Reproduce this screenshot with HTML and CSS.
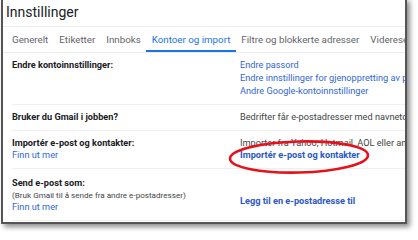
FILE: index.html
```html
<!DOCTYPE html>
<html lang="no">
<head>
<meta charset="utf-8">
<title>Innstillinger</title>
<link rel="stylesheet" href="styles.css">
</head>
<body>
<div class="window">
  <div class="title">Innstillinger</div>
  <nav class="tabs">
    <span class="tab">Generelt</span>
    <span class="tab">Etiketter</span>
    <span class="tab">Innboks</span>
    <span class="tab active">Kontoer og import</span>
    <span class="tab">Filtre og blokkerte adresser</span>
    <span class="tab">Videresending og POP/IMAP</span>
  </nav>
  <div class="rows">
    <div class="row r1">
      <div class="label"><b>Endre kontoinnstillinger:</b></div>
      <div class="value">
        <a class="link">Endre passord</a>
        <a class="link">Endre innstillinger for gjenoppretting av passord</a>
        <a class="link">Andre Google-kontoinnstillinger</a>
      </div>
    </div>
    <div class="row r2">
      <div class="label"><b>Bruker du Gmail i jobben?</b></div>
      <div class="value"><span class="muted">Bedrifter får e-postadresser med navnetdomenet sitt</span></div>
    </div>
    <div class="row r3">
      <div class="label"><b>Importér e-post og kontakter:</b><a class="link">Finn ut mer</a></div>
      <div class="value">
        <span class="muted">Importer fra Yahoo, Hotmail, AOL eller andre nettpost- eller POP3-kontoer.</span>
        <a class="link strong">Importér e-post og kontakter</a>
        <svg class="ring" width="146" height="38" viewBox="0 0 146 38"><ellipse cx="73" cy="19" rx="69" ry="15.5" fill="none" stroke="#e8101a" stroke-width="2.6" transform="rotate(-1.5 73 19)"/></svg>
      </div>
    </div>
    <div class="row r4">
      <div class="label"><b>Send e-post som:</b><span class="small">(Bruk Gmail til å sende fra andre e-postadresser)</span><a class="link">Finn ut mer</a></div>
      <div class="value"><a class="link strong add">Legg til en e-postadresse til</a></div>
    </div>
  </div>
</div>
</body>
</html>
```
FILE: styles.css
```css
html, body {
  margin: 0;
  padding: 0;
  background: #fff;
}
body {
  font-family: Roboto, "Liberation Sans", Arial, sans-serif;
  color: #202124;
  width: 418px;
  height: 236px;
  overflow: hidden;
}
.window {
  margin: -2px 0 0 1px;
  width: 402px;
  height: 222px;
  border: 2px solid #555;
  background: #fff;
  box-shadow: 3px 3px 5px rgba(0, 0, 0, 0.45);
  overflow: hidden;
  white-space: nowrap;
}
.title {
  height: 27px;
  box-sizing: border-box;
  padding: 3px 0 0 3px;
  font-size: 14px;
  line-height: 18px;
  color: #202124;
  border-bottom: 1px solid #ececec;
}
.tabs {
  display: flex;
  height: 26px;
  box-sizing: border-box;
  padding-left: 3.5px;
  border-bottom: 1px solid #ececec;
  font-size: 9.75px;
  color: #5f6368;
  overflow: hidden;
}
.tab {
  padding: 6px 5.5px 0;
  line-height: 13px;
  flex: none;
}
.tab.active {
  color: #1a73e8;
  border-bottom: 2px solid #1a73e8;
}
.rows {
  margin-left: 9px;
  font-size: 9.2px;
  line-height: 13px;
}
.row {
  display: flex;
  border-bottom: 1px solid #efefef;
  box-sizing: border-box;
}
.label {
  width: 228px;
  flex: none;
  display: flex;
  flex-direction: column;
}
.label b {
  font-weight: 700;
  color: #202124;
}
.value {
  display: flex;
  flex-direction: column;
  position: relative;
}
.link {
  color: #3367d6;
}
.link.strong {
  font-weight: 700;
  color: #2a58c8;
}
.muted {
  color: #444;
}
.small {
  font-size: 8.1px;
  line-height: 12px;
  color: #444;
}
.r1 { height: 52px; padding-top: 5px; }
.r2 { height: 26px; padding-top: 5px; }
.r3 { height: 38px; padding-top: 6px; line-height: 12px; }
.r4 { height: 52px; padding-top: 7px; }
.r4 .label a { line-height: 12px; }
.add { margin-top: 17.5px; }
.ring {
  position: absolute;
  left: -14px;
  top: 1px;
}
```
